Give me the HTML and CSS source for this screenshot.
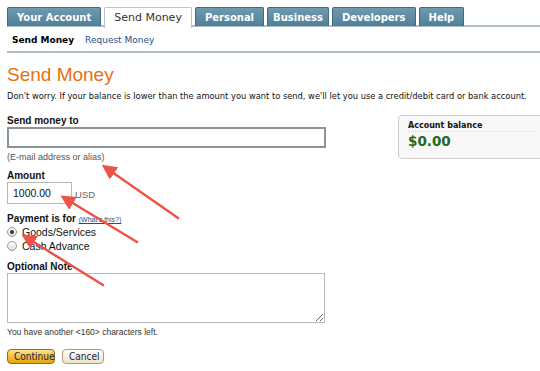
FILE: index.html
```html
<!DOCTYPE html>
<html lang="en">
<head>
    <meta charset="UTF-8">
    <meta name="viewport" content="width=device-width, initial-scale=1.0">
    <title>Send Money</title>
    <link rel="stylesheet" href="styles.css">
</head>
<body>
    <div class="page">
        <ul class="tabs">
            <li class="tab">Your Account</li>
            <li class="tab active">Send Money</li>
            <li class="tab">Personal</li>
            <li class="tab narrow">Business</li>
            <li class="tab">Developers</li>
            <li class="tab">Help</li>
        </ul>
        <div class="subnav">
            <span class="current">Send Money</span>
            <a href="#" class="sublink">Request Money</a>
        </div>

        <h1 class="title">Send Money</h1>
        <p class="intro">Don't worry. If your balance is lower than the amount you want to send, we'll let you use a credit/debit card or bank account.</p>

        <div class="main">
            <form class="form">
                <label class="label">Send money to</label>
                <input class="field email" type="text">
                <div class="hint">(E-mail address or alias)</div>

                <label class="label">Amount</label>
                <div class="amount-row">
                    <input class="field amount" type="text" value="1000.00">
                    <span class="currency">USD</span>
                </div>

                <div class="label">Payment is for <a href="#" class="help">(What's this?)</a></div>
                <div class="radio-row"><span class="radio checked"></span>Goods/Services</div>
                <div class="radio-row"><span class="radio"></span>Cash Advance</div>

                <label class="label note-label">Optional Note</label>
                <textarea class="note"></textarea>
                <div class="counter">You have another &lt;160&gt; characters left.</div>

                <div class="buttons">
                    <button type="button" class="btn primary">Continue</button>
                    <button type="button" class="btn secondary">Cancel</button>
                </div>
            </form>

            <div class="balance">
                <div class="balance-label">Account balance</div>
                <div class="balance-value">$0.00</div>
            </div>
        </div>
    </div>

    <!-- annotation arrows -->
    <svg class="arrows" viewBox="0 0 540 371">
        <defs>
            <marker id="head" markerWidth="6" markerHeight="6" refX="1" refY="3" orient="auto" markerUnits="strokeWidth">
                <path d="M0,0 L6,3 L0,6 Z" fill="#ef5348"></path>
            </marker>
        </defs>
        <line x1="178" y1="218" x2="112" y2="172" marker-end="url(#head)"></line>
        <line x1="137" y1="242" x2="71" y2="202" marker-end="url(#head)"></line>
        <line x1="103" y1="285" x2="32" y2="241" marker-end="url(#head)"></line>
    </svg>
</body>
</html>
```

FILE: styles.css
```css
body{
  margin:0;
  font-family:"DejaVu Sans", Verdana, sans-serif;
  color:#222;
  background:#fff;
  overflow:hidden;
}
.page{padding:7px 0 0 7px;}

/* tabs */
.tabs{
  display:flex;
  gap:3px;
  margin:0;
  padding:0;
  list-style:none;
  border-bottom:2px solid #aebfcc;
  height:18px;
}
.tab{
  height:18px;
  padding:0 9px;
  background:linear-gradient(#6f9ab0,#4f7f98);
  border:1px solid #3f6a82;
  border-bottom:none;
  border-radius:2px 2px 0 0;
  color:#fff;
  font-weight:bold;
  font-size:10px;
  line-height:19px;
}
.tab.narrow{padding:0 5px;}
.tab.active{
  background:#fff;
  color:#333;
  font-weight:normal;
  border-color:#b9c6cf;
  height:20px;
  font-size:11px;
}

/* sub nav */
.subnav{
  display:flex;
  gap:11px;
  font-size:9px;
  padding:8px 0 0 5px;
  height:16px;
  border-bottom:2px solid #aebfcc;
}
.current{font-weight:bold;color:#000;}
.sublink{color:#1d4f8c;text-decoration:none;}

.title{
  margin:12px 0 0;
  font-family:"Liberation Sans", Arial, sans-serif;
  font-weight:normal;
  font-size:19px;
  color:#e8700e;
  line-height:20px;
}
.intro{
  margin:6px 0 0;
  font-size:8.3px;
  color:#111;
}

.main{
  display:flex;
  justify-content:space-between;
  margin-top:14px;
}
.form{
  display:flex;
  flex-direction:column;
  width:320px;
  font-family:"Liberation Sans", Arial, sans-serif;
}
.label{
  display:block;
  font-weight:bold;
  font-size:10px;
  color:#111;
  margin-bottom:1px;
}
.field{
  box-sizing:border-box;
  font:10.5px "Liberation Sans", Arial, sans-serif;
  margin:0;
}
.email{
  width:319px;
  height:21px;
  border:2px solid #8a949c;
}
.hint{
  font-size:9px;
  color:#555;
  margin:4px 0 8px;
}
.amount-row{display:flex;align-items:flex-end;gap:3px;margin-bottom:9px;}
.amount{
  width:65px;
  height:22px;
  border:1px solid #b8b8b8;
  padding:0 5px;
  color:#111;
}
.currency{font-size:9.5px;color:#666;padding-bottom:4px;}
.help{
  font-size:7px;
  font-weight:normal;
  color:#1d4f8c;
}
.radio-row{
  display:flex;
  align-items:center;
  gap:5px;
  font-size:10.5px;
  color:#111;
  height:14px;
}
.radio{
  box-sizing:border-box;
  width:10px;
  height:10px;
  border-radius:50%;
  border:1px solid #9a9a9a;
  background:linear-gradient(#fff,#dcdcdc);
  display:flex;
  align-items:center;
  justify-content:center;
}
.radio.checked::after{
  content:"";
  width:4px;
  height:4px;
  border-radius:50%;
  background:#333;
}
.note-label{margin-top:8px;}
.note{
  box-sizing:border-box;
  width:318px;
  height:50px;
  border:1px solid #b8b8b8;
  margin:0;
  resize:both;
}
.counter{
  font-size:8.5px;
  color:#333;
  margin-top:4px;
}
.buttons{display:flex;gap:7px;margin-top:12px;}
.btn{
  height:15px;
  padding:0 6px;
  border-radius:4px;
  font:10px "DejaVu Sans Condensed", "DejaVu Sans", sans-serif;
  color:#13205a;
  line-height:13px;
}
.primary{
  width:48px;
  background:linear-gradient(#fde58a,#f4bb29 55%,#e6a312);
  border:1px solid #8c6f2a;
}
.secondary{
  width:42px;
  background:linear-gradient(#fffdf0,#ebe6c6);
  border:1px solid #a59f7e;
}

/* balance box */
.balance{
  box-sizing:border-box;
  width:150px;
  height:44px;
  margin:0 -8px 0 0;
  padding:5px 9px;
  border:1px solid #cfcfcf;
  border-radius:4px;
  background:#f8f8f8;
}
.balance-label{
  font-size:8px;
  font-weight:bold;
  color:#111;
  border-bottom:1px dotted #ddd;
  padding-bottom:1px;
}
.balance-value{
  font-size:13.5px;
  font-weight:bold;
  color:#1e6b1e;
  margin-top:1px;
}

/* annotations */
.arrows{
  position:absolute;
  left:0;
  top:0;
  width:540px;
  height:371px;
  pointer-events:none;
}
.arrows line{
  stroke:#ef5348;
  stroke-width:2.5;
  stroke-linecap:round;
}
```
